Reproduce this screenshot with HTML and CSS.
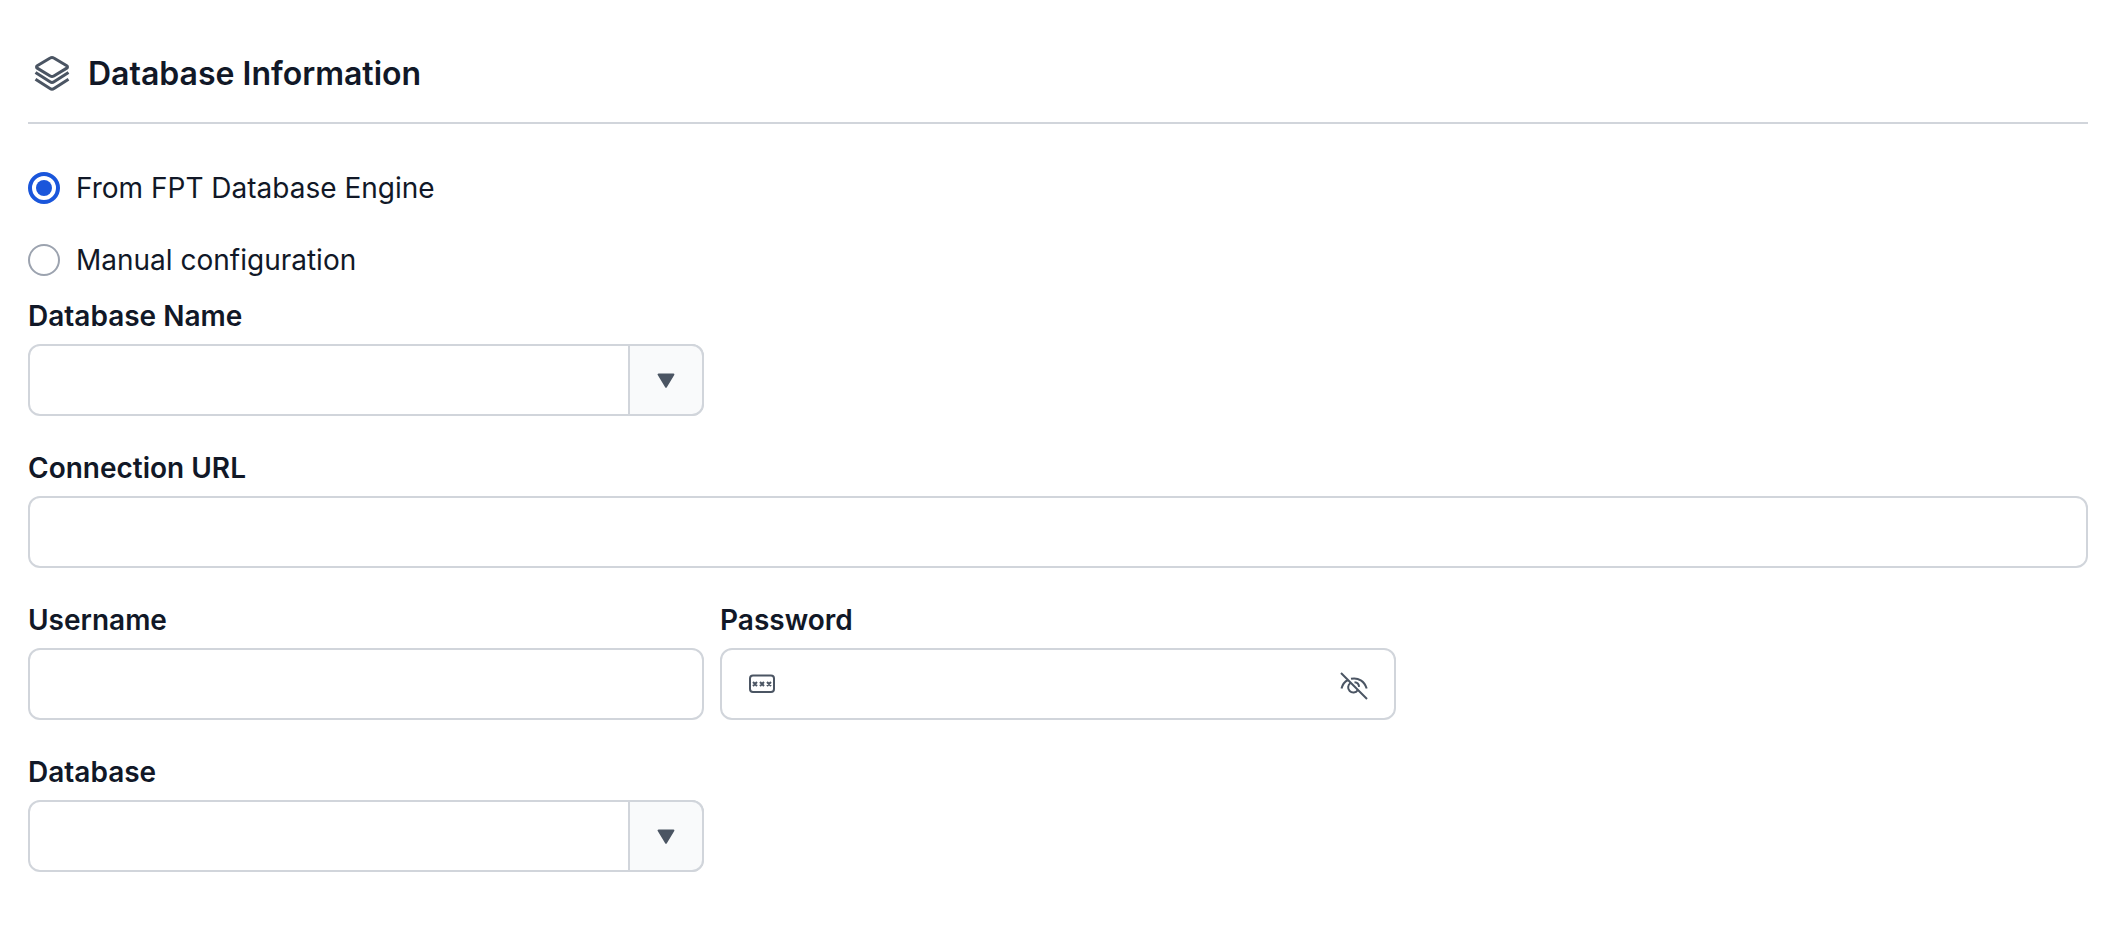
FILE: index.html
```html
<!DOCTYPE html>
<html lang="en">
<head>
    <meta charset="UTF-8">
    <meta name="viewport" content="width=device-width, initial-scale=1.0">
    <title>Database Information</title>
    <link rel="stylesheet" href="styles.css">
</head>
<body>
    <form class="db-form">
        <div class="form-header">
            <svg class="header-icon" viewBox="0 0 40 40" aria-hidden="true">
                <path d="M18.200 4 5.200 11.700a1.400 1.400 0 0 0 0 2.400l13 7.900a3.400 3.400 0 0 0 3.600 0l13-7.900a1.400 1.400 0 0 0 0-2.400L21.800 4a3.400 3.400 0 0 0-3.600 0Z"/>
                <path d="M3.500 18.500 18 27.800a3.600 3.600 0 0 0 4 0l14.500-9.300"/>
                <path d="M3.500 25.200 18 34.500a3.600 3.600 0 0 0 4 0l14.500-9.300"/>
            </svg>
            <h2>Database Information</h2>
        </div>

        <div class="radio-group">
            <label class="radio">
                <input type="radio" name="source" value="engine" checked>
                From FPT Database Engine
            </label>
            <label class="radio">
                <input type="radio" name="source" value="manual">
                Manual configuration
            </label>
        </div>

        <div class="form-grid">
            <div class="field first">
                <label for="databaseName">Database Name</label>
                <div class="select-box">
                    <select id="databaseName" name="databaseName"></select>
                    <span class="arrow">
                        <svg viewBox="0 0 18 16" aria-hidden="true"><path d="M1.600 2.500h14.800L9 14.800Z"/></svg>
                    </span>
                </div>
            </div>

            <div class="field full">
                <label for="connectionUrl">Connection URL</label>
                <input type="text" id="connectionUrl" name="connectionUrl">
            </div>

            <div class="field first">
                <label for="username">Username</label>
                <input type="text" id="username" name="username">
            </div>

            <div class="field">
                <label for="password">Password</label>
                <div class="password-box">
                    <svg class="icon" viewBox="0 0 32 32" aria-hidden="true">
                        <rect x="4" y="7.500" width="24" height="16.500" rx="3"/>
                        <path d="m7 14 4 4m0-4-4 4m7-4 4 4m0-4-4 4m7-4 4 4m0-4-4 4"/>
                    </svg>
                    <input type="password" id="password" name="password">
                    <button type="button" class="toggle" aria-label="Show password">
                        <svg class="icon" viewBox="0 0 32 32" aria-hidden="true">
                            <path d="M3 5l26 26M3.500 20.500C4.500 16.500 7 13.500 10 12M13 10.800c7.500-1.600 13.500 2.500 15.700 9.700"/>
                            <path d="M12.500 15a5.200 5.200 0 1 0 7.200 7.200M16.500 14.200a5 5 0 0 1 4.600 4.600"/>
                        </svg>
                    </button>
                </div>
            </div>

            <div class="field first">
                <label for="database">Database</label>
                <div class="select-box">
                    <select id="database" name="database"></select>
                    <span class="arrow">
                        <svg viewBox="0 0 18 16" aria-hidden="true"><path d="M1.600 2.500h14.800L9 14.800Z"/></svg>
                    </span>
                </div>
            </div>
        </div>
    </form>
</body>
</html>
```
FILE: styles.css
```css
* {
    box-sizing: border-box;
}
body {
    margin: 0;
    background-color: #fff;
    color: #111827;
    font-family: Inter, sans-serif;
    font-size: 28px;
    line-height: 40px;
}
.db-form {
    padding: 48px 22px 48px 28px;
}
.form-header {
    display: flex;
    align-items: center;
    gap: 16px;
    padding: 0 4px 22px;
    border-bottom: 2px solid #d1d5db;
}
.form-header h2 {
    margin: 0;
    font-size: 32px;
    font-weight: 600;
    line-height: 52px;
}
.header-icon {
    width: 40px;
    height: 40px;
    fill: none;
    stroke: #4b5563;
    stroke-width: 3;
}
.radio-group {
    display: flex;
    flex-direction: column;
    align-items: flex-start;
    gap: 32px;
    padding: 44px 0 16px;
}
.radio {
    display: flex;
    align-items: center;
    gap: 16px;
}
.radio input {
    appearance: none;
    width: 32px;
    height: 32px;
    margin: 0;
    border: 2px solid #9ca3af;
    border-radius: 50%;
    background-color: #fff;
}
.radio input:checked {
    border: 4px solid #1a56db;
    background: #1a56db content-box;
    padding: 4px;
}
.form-grid {
    display: grid;
    grid-template-columns: repeat(3, 1fr);
    gap: 32px 16px;
}
.field {
    display: flex;
    flex-direction: column;
    gap: 8px;
}
.first {
    grid-column-start: 1;
}
.full {
    grid-column: 1 / -1;
}
.field label {
    font-weight: 600;
}
.field input,
.field select,
.password-box {
    width: 100%;
    height: 72px;
    padding: 0 24px;
    border: 2px solid #d1d5db;
    border-radius: 12px;
    background-color: #fff;
    color: #111827;
    font: inherit;
}
.select-box {
    display: grid;
}
.select-box select,
.arrow {
    grid-area: 1 / 1;
}
.select-box select {
    appearance: none;
}
.arrow {
    display: flex;
    align-items: center;
    justify-content: center;
    justify-self: end;
    width: 76px;
    border: 2px solid #d1d5db;
    border-radius: 0 12px 12px 0;
    background-color: #f9fafb;
    pointer-events: none;
}
.arrow svg {
    width: 18px;
    height: 16px;
    fill: #4b5563;
    stroke: #4b5563;
    stroke-width: 2;
    stroke-linejoin: round;
}
.password-box {
    display: flex;
    align-items: center;
    gap: 12px;
}
.password-box input {
    flex: 1;
    min-width: 0;
    height: 60px;
    padding: 0;
    border: none;
}
.toggle {
    display: flex;
    padding: 0;
    border: none;
    background: none;
    cursor: pointer;
}
.icon {
    width: 32px;
    height: 32px;
    fill: none;
    stroke: #4b5563;
    stroke-width: 2;
}
```
